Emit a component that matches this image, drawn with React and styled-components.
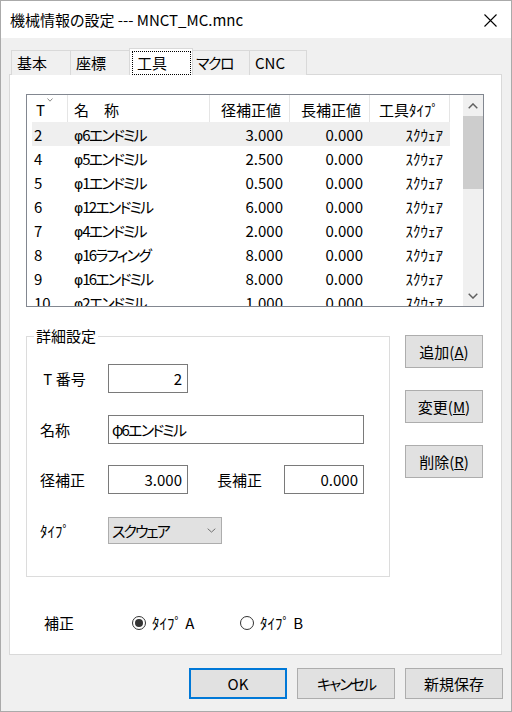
import React from 'react';
import styled, { createGlobalStyle } from 'styled-components';

const FONT = `"Noto Sans CJK JP", "Noto Sans", sans-serif`;

const GlobalStyle = createGlobalStyle`
  html, body { margin: 0; padding: 0; background: #f0f0f0; }
  body { font-family: ${FONT}; font-size: 15px; color: #000; font-feature-settings: "palt"; }
  * { box-sizing: border-box; }
`;

const Window = styled.div`
  width: 512px; height: 712px; border: 1px solid #aaaaaa;
  display: flex; flex-direction: column; background: #f0f0f0;
`;
const TitleBar = styled.div`
  flex: none; height: 37px; background: #fff;
  display: flex; align-items: center; justify-content: space-between;
  padding: 1px 14px 0 9px;
`;
const Title = styled.div` font-size: 15px; line-height: 20px; `;
const CloseIcon = () => (
  <svg width="13" height="13" viewBox="0 0 13 13">
    <path d="M0.5 0.5 L12.5 12.5 M12.5 0.5 L0.5 12.5" stroke="#000" strokeWidth="1.1" fill="none" />
  </svg>
);

const Body = styled.div`
  flex: 1; min-height: 0; display: flex; flex-direction: column;
  padding: 10px 9px 12px 8px;
`;

const TabStrip = styled.div`
  flex: none; display: flex; align-items: flex-end; height: 27px;
  padding-left: 2px; margin-bottom: -1px; position: relative; z-index: 1;
`;
const Tab = styled.div`
  width: ${p => p.$w}px; height: ${p => (p.$active ? 27 : 25)}px;
  margin-left: ${p => (p.$first ? 0 : p.$active ? -2 : -1)}px;
  margin-right: ${p => (p.$active ? -2 : 0)}px;
  border: 1px solid #d9d9d9; border-bottom: none;
  background: ${p => (p.$active ? '#fff' : '#f0f0f0')};
  position: relative; z-index: ${p => (p.$active ? 2 : 1)};
  display: flex;
  padding: ${p => (p.$active ? '2px 1px 1px 2px' : '0 0 0 5px')};
  align-items: center; line-height: 22px;
  letter-spacing: ${p => p.$ls || 0}px;
`;
const FocusBox = styled.div`
  flex: 1; border: 1px dotted #000; padding-left: 4px;
  display: flex; align-items: center;
`;

const Panel = styled.div`
  flex: 1; min-height: 0; background: #fff; border: 1px solid #d9d9d9;
  display: flex; flex-direction: column; padding: 19px 15px 0 16px;
`;

const ListView = styled.div`
  flex: none; width: 458px; height: 213px; border: 1px solid #828790; display: flex;
`;
const ListMain = styled.div`
  flex: 1; overflow: hidden; display: flex; flex-direction: column;
`;
const HeaderRow = styled.div`
  flex: none; height: 27px; display: grid;
  grid-template-columns: 41px 142px 80px 80px 80px;
`;
const HeaderCell = styled.div`
  position: relative; border-right: 1px solid #e5e5e5;
  padding: 2px 0 0 ${p => p.$pad}px; line-height: 25px; white-space: nowrap;
`;
const SortMark = styled.svg` position: absolute; left: 20px; top: 3px; `;
const Rows = styled.div` padding-left: 5px; `;
const Row = styled.div`
  height: 24px; width: 418px; display: grid;
  grid-template-columns: 36px 142px 80px 80px 80px;
  background: ${p => (p.$selected ? '#efefef' : 'transparent')};
  line-height: 22px; padding-top: 2px;
`;
const Cell = styled.div`
  white-space: nowrap; overflow: hidden;
  text-align: ${p => (p.$right ? 'right' : 'left')};
  padding-left: ${p => p.$pl || 0}px; padding-right: ${p => p.$pr || 0}px;
  letter-spacing: ${p => p.$ls || 0}px;
`;
const Phi = styled.span`
  font-family: "DejaVu Sans", "Noto Sans", sans-serif; font-size: 14px; letter-spacing: 0;
  margin-right: -1px;
`;

const ScrollBar = styled.div`
  flex: none; width: 20px; background: #f0f0f0; display: flex; flex-direction: column;
`;
const ScrollArrow = styled.div`
  flex: none; height: 21px; display: flex; align-items: center; justify-content: center;
`;
const ScrollThumb = styled.div` flex: none; height: 73px; background: #cdcdcd; `;
const ScrollTrack = styled.div` flex: 1; `;

const Middle = styled.div`
  flex: none; display: flex; margin-top: 19px;
`;
const Group = styled.fieldset`
  margin: 0; width: 364px; border: 1px solid #dcdcdc;
  padding: 0 0 31px 7px; min-width: 0;
`;
const Legend = styled.legend` padding: 0 2px; line-height: 20px; `;
const FormGrid = styled.div`
  margin: 18px 0 0 6px; display: grid;
  grid-template-columns: 68px 80px 29px 67px 80px;
  grid-auto-rows: 29px; row-gap: 21.5px; align-items: center;
`;
const Label = styled.div` line-height: 20px; white-space: nowrap; padding-top: 1px; `;
const TextBox = styled.input`
  font: inherit; font-feature-settings: "palt"; height: 29px; width: 100%; margin: 0;
  border: 1px solid #7a7a7a; background: #fff; color: #000;
  padding: 0 ${p => (p.$right ? 5 : 3)}px; outline: none;
  text-align: ${p => (p.$right ? 'right' : 'left')};
  grid-column: ${p => p.$span || 'auto'};
  letter-spacing: ${p => p.$ls || 0}px;
`;
const Combo = styled.div`
  grid-column: 2 / 6; width: 114px; height: 27px;
  background: #e1e1e1; border: 1px solid #adadad;
  display: flex; align-items: center; justify-content: space-between;
  padding: 0 5px 0 3px;
`;
const ComboText = styled.span` letter-spacing: -2px; `;

const SideButtons = styled.div`
  margin: 9px 0 0 15px; display: flex; flex-direction: column; gap: 22px;
`;
const Button = styled.button`
  font: inherit; font-feature-settings: "palt"; color: #000; margin: 0;
  width: ${p => p.$w}px; height: ${p => p.$h}px;
  background: #e1e1e1;
  border: ${p => (p.$default ? '2px solid #0078d7' : '1px solid #adadad')};
  padding: 0; display: flex; align-items: center; justify-content: center;
  line-height: 20px;
  letter-spacing: ${p => p.$ls || 0}px;
  u { text-decoration: underline; }
`;

const RadioRow = styled.div`
  flex: none; display: flex; align-items: center; height: 24px;
  margin-top: 34px; padding-left: 18px;
`;
const RadioLabel = styled.div` width: 88px; `;
const RadioOption = styled.div`
  width: ${p => p.$w}px; display: flex; align-items: center; gap: 6px;
`;
const RadioCircle = styled.span`
  flex: none; width: 14px; height: 14px; border-radius: 50%; border: 1px solid #333;
  display: flex; align-items: center; justify-content: center; background: #fff;
  &::after {
    content: ''; width: 8px; height: 8px; border-radius: 50%;
    background: ${p => (p.$checked ? '#333' : 'transparent')};
  }
`;

const ButtonRow = styled.div`
  flex: none; display: flex; justify-content: flex-end; gap: 10px;
  margin: 13px -1px 0 0;
`;

const Chevron = ({ up, color = '#606060', w = 10, h = 6, sw = 1.4 }) => (
  <svg width={w} height={h} viewBox={`0 0 ${w} ${h}`}>
    <polyline
      points={up ? `0.7,${h - 0.7} ${w / 2},0.9 ${w - 0.7},${h - 0.7}` : `0.7,0.7 ${w / 2},${h - 0.9} ${w - 0.7},0.7`}
      fill="none" stroke={color} strokeWidth={sw}
    />
  </svg>
);

const tools = [
  ['2', '6エンドミル', '3.000'],
  ['4', '5エンドミル', '2.500'],
  ['5', '1エンドミル', '0.500'],
  ['6', '12エンドミル', '6.000'],
  ['7', '4エンドミル', '2.000'],
  ['8', '16ラフィング', '8.000'],
  ['9', '16エンドミル', '8.000'],
  ['10', '2エンドミル', '1.000'],
];

const tabs = [
  { label: '基本', w: 60 },
  { label: '座標', w: 61 },
  { label: '工具', w: 64, active: true },
  { label: 'マクロ', w: 60, ls: -1.5 },
  { label: 'CNC', w: 58 },
];

export default function App() {
  return (
    <>
      <GlobalStyle />
      <Window>
        <TitleBar>
          <Title>機械情報の設定 --- MNCT_MC.mnc</Title>
          <CloseIcon />
        </TitleBar>
        <Body>
          <TabStrip>
            {tabs.map((t, i) => (
              <Tab key={t.label} $w={t.w} $active={t.active} $first={i === 0} $ls={t.ls}>
                {t.active ? <FocusBox>{t.label}</FocusBox> : t.label}
              </Tab>
            ))}
          </TabStrip>
          <Panel>
            <ListView>
              <ListMain>
                <HeaderRow>
                  <HeaderCell $pad={9}>
                    T
                    <SortMark width="6" height="4" viewBox="0 0 6 4">
                      <polyline points="0.5,0.5 3,3.2 5.5,0.5" fill="none" stroke="#8a8a8a" strokeWidth="1" />
                    </SortMark>
                  </HeaderCell>
                  <HeaderCell $pad={6}>名　称</HeaderCell>
                  <HeaderCell $pad={11}>径補正値</HeaderCell>
                  <HeaderCell $pad={11}>長補正値</HeaderCell>
                  <HeaderCell $pad={9}>工具ﾀｲﾌﾟ</HeaderCell>
                </HeaderRow>
                <Rows>
                  {tools.map((r, i) => (
                    <Row key={r[0]} $selected={i === 0}>
                      <Cell $pl={2}>{r[0]}</Cell>
                      <Cell $pl={6} $ls={-1.8}><Phi>φ</Phi>{r[1]}</Cell>
                      <Cell $right $pr={7}>{r[2]}</Cell>
                      <Cell $right $pr={7}>0.000</Cell>
                      <Cell $right $pr={7}>ｽｸｳｪｱ</Cell>
                    </Row>
                  ))}
                </Rows>
              </ListMain>
              <ScrollBar>
                <ScrollArrow><Chevron up /></ScrollArrow>
                <ScrollThumb />
                <ScrollTrack />
                <ScrollArrow><Chevron /></ScrollArrow>
              </ScrollBar>
            </ListView>

            <Middle>
              <Group>
                <Legend>詳細設定</Legend>
                <FormGrid>
                  <Label>&nbsp;T 番号</Label>
                  <TextBox $right readOnly value="2" />
                  <span /><span /><span />
                  <Label>名称</Label>
                  <TextBox $span="2 / 6" $ls={-1.8} readOnly value="φ6エンドミル" />
                  <Label>径補正</Label>
                  <TextBox $right readOnly value="3.000" />
                  <span />
                  <Label>長補正</Label>
                  <TextBox $right readOnly value="0.000" />
                  <Label>ﾀｲﾌﾟ</Label>
                  <Combo>
                    <ComboText>スクウェア</ComboText>
                    <Chevron color="#707070" w={9} h={5} sw={1} />
                  </Combo>
                </FormGrid>
              </Group>
              <SideButtons>
                <Button $w={78} $h={33}>追加(<u>A</u>)</Button>
                <Button $w={78} $h={33}>変更(<u>M</u>)</Button>
                <Button $w={78} $h={33}>削除(<u>R</u>)</Button>
              </SideButtons>
            </Middle>

            <RadioRow>
              <RadioLabel>補正</RadioLabel>
              <RadioOption $w={108}>
                <RadioCircle $checked />
                <span>ﾀｲﾌﾟ A</span>
              </RadioOption>
              <RadioOption $w={80}>
                <RadioCircle />
                <span>ﾀｲﾌﾟ B</span>
              </RadioOption>
            </RadioRow>
          </Panel>
          <ButtonRow>
            <Button $w={98} $h={31} $default>OK</Button>
            <Button $w={98} $h={31} $ls={-2}>キャンセル</Button>
            <Button $w={98} $h={31}>新規保存</Button>
          </ButtonRow>
        </Body>
      </Window>
    </>
  );
}
